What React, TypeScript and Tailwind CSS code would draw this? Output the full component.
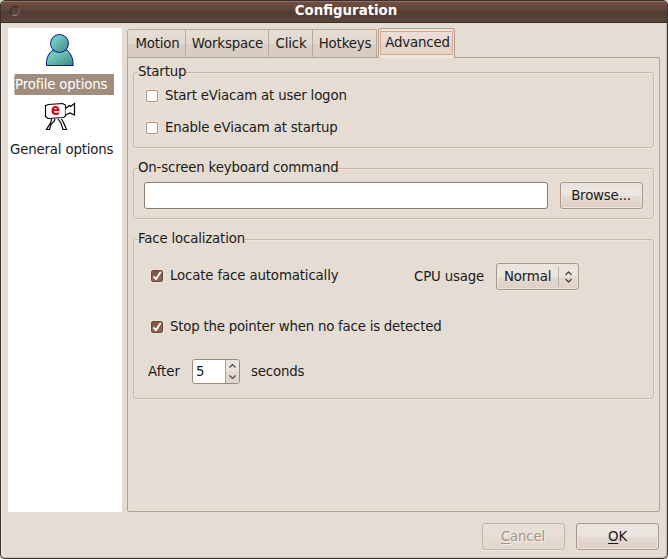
import React from "react";

function Group({ title, className, children }: { title: string; className: string; children: React.ReactNode }) {
  return (
    <section className={`w-[521px] rounded-[3px] border border-[#c9b8aa] shadow-[1px_1px_0_#efe8e1,inset_1px_1px_0_#eee6df] ${className}`}>
      <h2 className="mt-[-9px] ml-[4px] h-[16px] w-fit bg-[#e5ddd4] whitespace-pre">{title}</h2>
      {children}
    </section>
  );
}

function Check({ on, label, className = "" }: { on?: boolean; label: string; className?: string }) {
  return (
    <label className={`flex h-[16px] items-start whitespace-pre ${className}`}>
      <span
        className={`mt-[2px] mr-[7px] block h-[12px] w-[12px] shrink-0 rounded-[2px] border shadow-[0_0_0_1px_#ece4dd] ${
          on ? "border-[#634a3e] bg-[linear-gradient(#7f5342,#956551)]" : "border-[#ab9789] bg-white"
        }`}
      >
        {on && (
          <svg viewBox="0 0 10 10" className="block h-[10px] w-[10px] overflow-visible" fill="none" stroke="#fff" strokeWidth="1.9">
            <path d="M1.500 5.500L4 8L8.800 0.800" />
          </svg>
        )}
      </span>
      {label}
    </label>
  );
}

const button =
  "flex h-[27px] w-[83px] items-center justify-center rounded-[3px] border border-[#a89789] bg-[linear-gradient(#e9e1dc,#ede7e2_49%,#e5dbd4_51%,#dccfc5)] shadow-[inset_0_0_0_1px_#eee5de,0_0_0_1px_#e9e1d9]";
const tab =
  "flex h-[28px] items-center justify-center border-t border-r border-[#bba999] bg-[linear-gradient(#e6ddd4,#e1d8cf_50%,#dbcfc5_52%,#d8cbc0)]";

export default function App() {
  return (
    <div className="h-[559px] w-[668px] bg-[#d8d4d0] font-['DejaVu_Sans',sans-serif] text-[13.33px] leading-[15px] tracking-[-0.17px] text-[#1a1a1a]">
      <div className="flex h-[559px] w-[668px] flex-col overflow-hidden rounded-[5px] border border-[#37302d] bg-[#e5ddd4] shadow-[inset_-1px_-1px_0_#c9bcb0,inset_1px_0_0_#f1ebe5]">
        <header className="flex h-[22px] shrink-0 items-start border-t border-b border-t-[#936f63] border-b-[#3b2d27] bg-[linear-gradient(#714d40,#5f453a_40%,#503d33_48%,#5a453b)] text-white">
          <span className="mt-[4px] ml-[9px] h-[10px] w-[10px] rounded-full border border-[#30231e] border-r-[#80685e] border-b-[#a08a80] bg-[#59443b]" />
          <h1 className="mr-[-5px] flex-1 pt-[1px] text-center font-bold tracking-normal">Configuration</h1>
        </header>
        <main className="flex h-[489px] shrink-0 pt-[5px] pl-[7px]">
          <aside className="h-[484px] w-[114px] bg-white">
            <svg className="mt-[5px] ml-[37px] block h-[34px] w-[30px]" viewBox="0 0 30 34">
              <defs>
                <linearGradient id="body" x1="0" x2="1" y1="0" y2="1">
                  <stop offset="0" stopColor="#63b9b0" />
                  <stop offset="0.3" stopColor="#6fc9be" />
                  <stop offset="1" stopColor="#3f837f" />
                </linearGradient>
              </defs>
              <path d="M1.500 32.500V28.500C2 24 4 19.500 8 17H22C25 19.500 27.500 24 28 28.500V31.500L28.500 32.500Z" fill="url(#body)" stroke="#0a1a90" />
              <circle cx="14.500" cy="10.500" r="9" fill="url(#body)" stroke="#0a1a90" />
            </svg>
            <div className="mt-[7px] ml-[6px] h-[21px] w-[100px] border-l border-dashed border-[#d8cfc6] bg-[#a08d7d] pt-[3px] whitespace-pre text-white">Profile options</div>
            <svg className="mt-[7px] ml-[37px] block h-[29px] w-[31px] overflow-visible" viewBox="0 0 31 29" fill="white" stroke="black" strokeWidth="1.200">
              <path d="M6.500 17L6 20L1.500 27.500H4.500L6 22.500L9 19.500L10 17" />
              <path d="M13 17L16 21L18 27.500H21.500L18.500 20.500L16.500 17" />
              <path d="M0.500 3.500L3.500 2.500L17.500 1.500L20.500 3V14L18.500 15.500L3 16.500L0.500 14.500Z" />
              <path d="M20.500 6.500L24.500 3.500L25.500 4.500L29.500 1.500V13L25 11L20.500 13" />
            <text x="6" y="13" fill="#cc0000" stroke="none" fontSize="16" fontWeight="bold" letterSpacing="0" textLength="9" lengthAdjust="spacingAndGlyphs">e</text>
            </svg>
            <div className="mt-[11px] ml-[2px] whitespace-pre">General options</div>
          </aside>
          <section className="ml-[5px] w-[533px] pt-[1px]">
            <nav className="flex h-[28px] items-start">
              <div className={`${tab} w-[59px] rounded-tl-[3px] border-l pl-[2px]`}>Motion</div>
              <div className={`${tab} w-[83px] pl-[1px]`}>Workspace</div>
              <div className={`${tab} w-[44px] pl-[1px]`}>Click</div>
              <div className={`${tab} w-[64px] pl-[1px]`}>Hotkeys</div>
              <div className="z-10 ml-px mt-[-1px] h-[30px] w-[77px] rounded-t-[3px] border border-b-0 border-[#b09d8d] bg-[#eee6dd] px-[1px] pt-[2px]">
                <div className="flex h-[24px] items-center justify-center border border-[#d9a68e] bg-[linear-gradient(#ebded6,#e8dad1_50%,#e4d3c9_52%,#e6d5ca)] pb-px pl-[2px]">Advanced</div>
              </div>
            </nav>
            <div className="h-[455px] rounded-[2px] rounded-tl-none border border-[#b3a08f] pt-[14px] pl-[5px]">
              <Group title="Startup" className="h-[76px]">
                <div className="pt-[8px] pl-[12px]">
                  <Check label="Start eViacam at user logon" />
                  <Check label="Enable eViacam at startup" className="mt-[16px]" />
                </div>
              </Group>
              <Group title="On-screen keyboard command" className="mt-[20px] h-[51px]">
                <div className="flex pt-[6px] pl-[10px]">
                  <input type="text" className="h-[27px] w-[404px] rounded-[3px] border border-[#8d7b6d] bg-white px-1" />
                  <button className={`${button} ml-[12px] pr-[1px]`}>Browse...</button>
                </div>
              </Group>
              <Group title="Face localization" className="mt-[20px] h-[160px]">
                <div className="mt-[16px] flex h-[27px] items-start pl-[17px]">
                  <Check on label="Locate face automatically" className="mt-[5px] w-[263px] tracking-[-0.14px]" />
                  <span className="mt-[6px] w-[82px] whitespace-pre">CPU usage</span>
                  <button className={`${button} justify-start pl-[7px]`}>
                    <span className="w-[54px] text-left">Normal</span>
                    <span className="h-[19px] w-px bg-[#bcaea3]" />
                    <svg className="ml-[5px] h-[12px] w-[9px]" viewBox="0 0 9 12" fill="none" stroke="#4a4440" strokeWidth="1.300">
                      <path d="M1.500 4L4.500 1L7.500 4M1.500 8L4.500 11L7.500 8" />
                    </svg>
                  </button>
                </div>
                <Check on label="Stop the pointer when no face is detected" className="mt-[29px] ml-[17px] tracking-[-0.22px]" />
                <div className="mt-[24px] ml-[14px] flex h-[25px] items-center">
                  <span className="w-[44px] tracking-normal">After</span>
                  <div className="flex h-[25px] w-[48px] overflow-hidden rounded-[3px] border border-[#9c8b7d] bg-white">
                    <span className="w-[32px] pl-[3px] leading-[23px]">5</span>
                    <span className="flex flex-1 items-center justify-center border-l border-[#b3a498] bg-[linear-gradient(#ebe5e0,#e9e2dc_49%,#e1d8d0_51%,#dfd4cb)]">
                      <svg className="h-[17px] w-[9px]" viewBox="0 0 9 17" fill="none" stroke="#4a4440" strokeWidth="1.200">
                        <path d="M1.500 4.500L4.500 1.500L7.500 4.500M1.500 12.500L4.500 15.500L7.500 12.500" />
                      </svg>
                    </span>
                  </div>
                  <span className="ml-[11px]">seconds</span>
                </div>
              </Group>
            </div>
          </section>
        </main>
        <footer className="flex justify-end pt-[11px] pr-[8px]">
          <button disabled className="flex h-[27px] w-[83px] items-center justify-center rounded-[3px] border border-[#c3b4a7] bg-[linear-gradient(#e7dfd7,#e8e0d9_49%,#e4dbd2_51%,#e2d7ce)] pr-[1px] text-[#a79584] shadow-[0_1px_0_#eee7e0] [text-shadow:1px_1px_0_#f5f0eb]">
            <span className="underline underline-offset-2">C</span>ancel
          </button>
          <button className={`${button} ml-[11px]`}>
            <span className="underline underline-offset-2">O</span>K
          </button>
        </footer>
      </div>
    </div>
  );
}
